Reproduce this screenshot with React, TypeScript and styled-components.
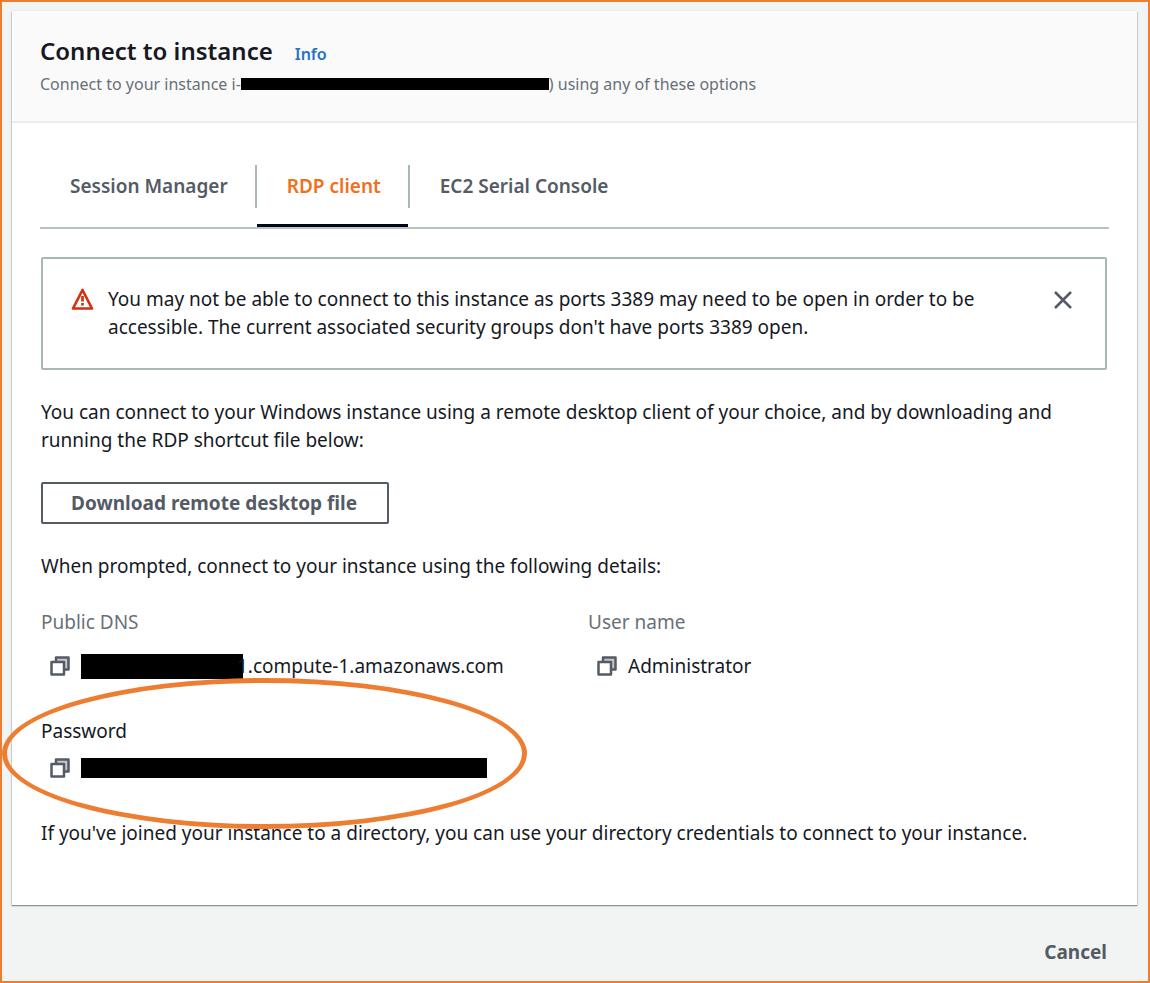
import React from "react";
import styled, { createGlobalStyle } from "styled-components";

const GlobalStyle = createGlobalStyle`
  * { box-sizing: border-box; }
  body {
    margin: 0;
    background: #f2f3f3;
    color: #16191f;
    font: 400 19px/28px "Noto Sans", "Open Sans", sans-serif;
  }
  h1, p, dl, dd { margin: 0; }
  button { font: inherit; cursor: pointer; }
`;

const Page = styled.div`
  min-height: 100vh;
  border: 2px solid #ed7d31;
  padding: 9px 11px 12px 10px;
`;

const Card = styled.main`
  background: #fff;
  box-shadow:
    0 -1px 0 0 #eaeded,
    0 1px 1px 0 #879596,
    1px 1px 1px 0 #d5dbdb,
    -1px 1px 1px 0 #d5dbdb;
`;

const CardHeader = styled.header`
  background: #fafafa;
  border-bottom: 2px solid #eaeded;
  padding: 22px 28px 25px;
`;

const TitleRow = styled.div`
  display: flex;
  align-items: baseline;
  gap: 22px;
  line-height: 36px;
`;

const Title = styled.h1`
  font-size: 24px;
  font-weight: 600;
`;

const InfoLink = styled.a`
  color: #1f74c4;
  font-size: 16px;
  font-weight: 600;
  text-decoration: none;
`;

const Subtitle = styled.p`
  color: #687078;
  font-size: 16px;
  line-height: 24px;
`;

const Redaction = styled.span<{ $width: number; $height: number; $overlap?: number }>`
  display: inline-block;
  width: ${(p) => p.$width}px;
  height: ${(p) => p.$height}px;
  margin-right: -${(p) => p.$overlap ?? 0}px;
  background: #000;
`;

const CardBody = styled.div`
  padding: 42px 30px 30px 29px;
`;

const Tabs = styled.div`
  display: flex;
  margin: 0 -2px 28px -1px;
  border-bottom: 2px solid #b9c3c4;
`;

const Tab = styled.button<{ $active?: boolean }>`
  height: 62px;
  border: 0;
  border-bottom: 3px solid ${(p) => (p.$active ? "#000716" : "transparent")};
  background: none;
  padding: 0 27px 17px 30px;
  color: ${(p) => (p.$active ? "#f0701c" : "#545b64")};
  font-weight: 600;
  white-space: nowrap;
`;

const TabDivider = styled.span`
  width: 2px;
  height: 43px;
  background: #aab7b8;
`;

const Alert = styled.section`
  display: flex;
  align-items: flex-start;
  min-height: 113px;
  border: 2px solid #aab7b8;
  border-radius: 2px;
  padding: 26px 28px;
`;

const AlertIcon = styled.svg`
  flex: none;
  width: 24px;
  height: 24px;
  margin: 2px 13px 0 0;
`;

const AlertText = styled.p`
  flex: 1;
  padding-right: 52px;
`;

const CloseButton = styled.button`
  flex: none;
  display: flex;
  border: 0;
  background: none;
  padding: 4px 3px;
`;

const Paragraph = styled.p`
  margin: 28px 0;
`;

const DownloadButton = styled.button`
  border: 2px solid #545b64;
  border-radius: 2px;
  background: #fff;
  padding: 5px 30px 5px 28px;
  color: #545b64;
  font-weight: 700;
`;

const Details = styled.dl`
  display: grid;
  grid-template-columns: 1fr 1fr;
  column-gap: 28px;
  row-gap: 37px;
  padding-bottom: 9px;
`;

const Detail = styled.div`
  position: relative;
`;

const Label = styled.dt<{ $strong?: boolean }>`
  color: ${(p) => (p.$strong ? "#16191f" : "#687078")};
`;

const Value = styled.dd<{ $gap: number }>`
  display: flex;
  align-items: center;
  height: 28px;
  padding-left: 8px;
  margin-top: ${(p) => p.$gap}px;
`;

const CopyButton = styled.button`
  flex: none;
  display: flex;
  border: 0;
  background: none;
  padding: 0;
  margin-right: 10px;
`;

const Highlight = styled.div`
  position: absolute;
  top: -39px;
  left: -39px;
  width: 525px;
  height: 151px;
  border: 5px solid #ed7d31;
  border-radius: 50%;
  pointer-events: none;
`;

const Footer = styled.footer`
  display: flex;
  justify-content: flex-end;
  padding: 33px 30px 0;
`;

const CancelButton = styled.button`
  border: 0;
  background: none;
  padding: 0;
  color: #545b64;
  font-weight: 700;
`;

function CopyIcon({ label }: { label: string }) {
  return (
    <CopyButton type="button" aria-label={label}>
      <svg width="22" height="22" viewBox="0 0 22 22" stroke="#545b64" strokeWidth="2.500" strokeLinejoin="round">
        <rect x="7" y="2.500" width="12.500" height="12" fill="#c4c7ca" />
        <rect x="2.500" y="7" width="12.500" height="12.500" fill="#fff" />
      </svg>
    </CopyButton>
  );
}

export default function App() {
  return (
    <>
      <GlobalStyle />
      <Page>
        <Card>
          <CardHeader>
            <TitleRow>
              <Title>Connect to instance</Title>
              <InfoLink href="#info">Info</InfoLink>
            </TitleRow>
            <Subtitle>
              Connect to your instance i-
              <Redaction $width={308} $height={12} />) using any of these options
            </Subtitle>
          </CardHeader>
          <CardBody>
            <Tabs role="tablist">
              <Tab type="button" role="tab" aria-selected={false}>Session Manager</Tab>
              <TabDivider />
              <Tab type="button" role="tab" aria-selected $active>RDP client</Tab>
              <TabDivider />
              <Tab type="button" role="tab" aria-selected={false}>EC2 Serial Console</Tab>
            </Tabs>
            <Alert role="alert">
              <AlertIcon viewBox="0 0 24 24" fill="none" stroke="#d13212" strokeWidth="2.700">
                <path d="M11.500 3L21 21.500H2Z" strokeLinejoin="round" />
                <path d="M11.500 9V14.500M11.500 16V18.500" />
              </AlertIcon>
              <AlertText>
                You may not be able to connect to this instance as ports 3389 may need to be open in
                order to be accessible. The current associated security groups don't have ports 3389
                open.
              </AlertText>
              <CloseButton type="button" aria-label="Dismiss">
                <svg width="22" height="22" viewBox="0 0 22 22" stroke="#545b64" strokeWidth="2.500">
                  <path d="M3 3L19 19M19 3L3 19" />
                </svg>
              </CloseButton>
            </Alert>
            <Paragraph>
              You can connect to your Windows instance using a remote desktop client of your choice,
              and by downloading and running the RDP shortcut file below:
            </Paragraph>
            <DownloadButton type="button">Download remote desktop file</DownloadButton>
            <Paragraph>
              When prompted, connect to your instance using the following details:
            </Paragraph>
            <Details>
              <Detail>
                <Label>Public DNS</Label>
                <Value $gap={16}>
                  <CopyIcon label="Copy public DNS" />
                  <Redaction $width={162} $height={25} $overlap={6} />
                  1.compute-1.amazonaws.com
                </Value>
              </Detail>
              <Detail>
                <Label>User name</Label>
                <Value $gap={16}>
                  <CopyIcon label="Copy user name" />
                  Administrator
                </Value>
              </Detail>
              <Detail>
                <Label $strong>Password</Label>
                <Value $gap={9}>
                  <CopyIcon label="Copy password" />
                  <Redaction $width={406} $height={20} />
                </Value>
                <Highlight />
              </Detail>
            </Details>
            <Paragraph>
              If you've joined your instance to a directory, you can use your directory credentials
              to connect to your instance.
            </Paragraph>
          </CardBody>
        </Card>
        <Footer>
          <CancelButton type="button">Cancel</CancelButton>
        </Footer>
      </Page>
    </>
  );
}
